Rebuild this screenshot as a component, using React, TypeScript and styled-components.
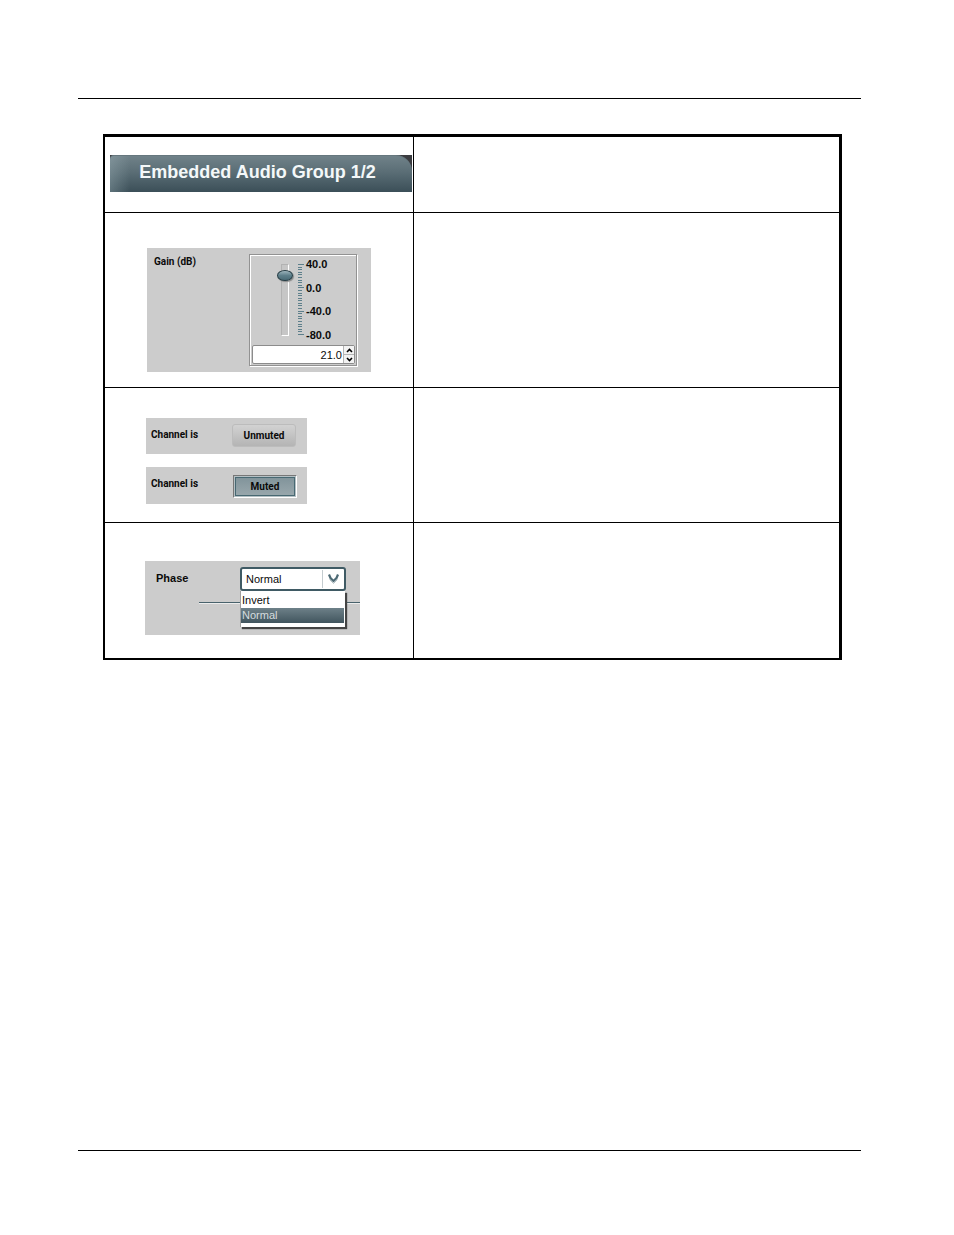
import { useState } from "react";
import styled, { createGlobalStyle, css } from "styled-components";

const palette = {
  panel: "#cccccc",
  teal: "#3f5a64",
  tick: "#5d7f8b",
  ink: "#0a0a0a",
};

const GlobalStyle = createGlobalStyle`
  body {
    margin: 0;
    background: #ffffff;
    color: ${palette.ink};
    font-family: "Liberation Sans", Arial, sans-serif;
  }
`;

const Page = styled.main`
  box-sizing: border-box;
  display: flex;
  min-height: 100vh;
  padding: 98px 93px 84px 78px;
`;

const Sheet = styled.section`
  flex: 1;
  border-top: 1px solid #000000;
  border-bottom: 1px solid #000000;
  padding: 35px 19px 35px 25px;
`;

const ParameterTable = styled.table`
  width: 100%;
  table-layout: fixed;
  border-collapse: separate;
  border-spacing: 0;
  border-style: solid;
  border-color: #000000;
  border-width: 3px 3px 2px 2px;
`;

const ControlCell = styled.td<{ $pad: string }>`
  box-sizing: border-box;
  width: 309px;
  padding: ${(props) => props.$pad};
  border-right: 1px solid #000000;
  vertical-align: top;

  tr:not(:last-child) > & {
    border-bottom: 1px solid #000000;
  }
`;

const DescriptionCell = styled.td`
  padding: 0;

  tr:not(:last-child) > & {
    border-bottom: 1px solid #000000;
  }
`;

const TabStrip = styled.div`
  background: #3b3c40;
`;

const Tab = styled.button`
  display: block;
  width: 100%;
  height: 37px;
  padding: 0 7px 4px 0;
  border: 0;
  border-radius: 4px 16px 0 0;
  background:
    linear-gradient(90deg, rgba(160, 180, 186, 0.35), rgba(160, 180, 186, 0) 20px),
    linear-gradient(#71838a, #5b6e76 45%, #3b4f58);
  box-shadow: inset 0 1px 0 #66777e;
  color: #f4f8f9;
  font-family: "Liberation Sans", Arial, sans-serif;
  font-size: 18px;
  font-weight: 700;
  line-height: 24px;
`;

const Panel = styled.div<{ $width: number; $height: number; $label: number }>`
  position: relative;
  box-sizing: border-box;
  display: grid;
  grid-template-columns: ${(props) => props.$label}px auto;
  justify-content: start;
  align-items: start;
  width: ${(props) => props.$width}px;
  min-height: ${(props) => props.$height}px;
  padding-top: 6px;
  background: ${palette.panel};
`;

const PanelStack = styled.div`
  display: flex;
  flex-direction: column;
  gap: 13px;
`;

const labelText = css`
  font-family: Roboto, "Liberation Sans", sans-serif;
  font-size: 10px;
  font-weight: 700;
  line-height: 14px;
`;

const Label = styled.label<{ $indent: number }>`
  ${labelText}
  padding-top: 1px;
  padding-left: ${(props) => props.$indent}px;
`;

const ChannelLabel = styled(Label)`
  padding-top: 4px;
`;

const WideLabel = styled(Label)`
  padding-top: 4px;
  font-family: "Liberation Sans", Arial, sans-serif;
  font-size: 11px;
`;

const GainBox = styled.div`
  box-sizing: border-box;
  display: flex;
  flex-direction: column;
  justify-content: space-between;
  width: 108px;
  height: 112px;
  padding: 8px 1px 1px 2px;
  border: 1px solid #929292;
  box-shadow: inset 1px 1px 0 #ffffff, 1px 1px 0 #ffffff;
`;

const Fader = styled.div`
  display: flex;
  align-items: flex-start;
  padding-left: 29px;
`;

const Track = styled.div`
  box-sizing: border-box;
  display: flex;
  align-items: center;
  justify-content: center;
  width: 8px;
  height: 72px;
  margin: 1px 9px 0 0;
  border: 1px solid #b2b2b2;
  border-right-color: #ffffff;
  border-bottom-color: #ffffff;
  background: #c6c6c6;
`;

const Slider = styled.input`
  flex: none;
  appearance: none;
  writing-mode: vertical-lr;
  direction: rtl;
  width: 16px;
  height: 82px;
  margin: 0;
  background: transparent;

  &::-webkit-slider-thumb {
    appearance: none;
    box-sizing: border-box;
    width: 16px;
    height: 11px;
    border: 1px solid #253c44;
    border-radius: 50%;
    background: linear-gradient(#9db4bc, #5e7f8a 50%, #4a6b76);
    box-shadow: 1px 1px 1px #8a8a8a;
  }
`;

const ScaleLabels = styled.div`
  display: flex;
  flex-direction: column;
  justify-content: space-between;
  height: 83px;
  margin: -5px 0 -6px 1px;
  font-size: 11px;
  font-weight: 700;
  line-height: 12px;
`;

const SpinBox = styled.div`
  box-sizing: border-box;
  display: flex;
  height: 19px;
  border: 1px solid #8c8c8c;
  border-radius: 2px;
  background: #ffffff;
`;

const SpinInput = styled.input`
  flex: 1;
  min-width: 0;
  padding: 0 1px 0 4px;
  border: 0;
  background: transparent;
  color: ${palette.ink};
  font-family: "Liberation Sans", sans-serif;
  font-size: 11px;
  text-align: right;
`;

const SpinButtons = styled.div`
  display: flex;
  flex-direction: column;
  width: 10px;
  border-left: 1px solid #b5b5b5;
`;

const SpinButton = styled.button`
  display: flex;
  flex: 1;
  align-items: center;
  justify-content: center;
  padding: 0;
  border: 0;
  background: #f2f2f2;

  & + & {
    border-top: 1px solid #b5b5b5;
  }
`;

const MuteButton = styled.button<{ $muted?: boolean }>`
  ${labelText}
  box-sizing: border-box;
  width: 64px;
  height: 23px;
  padding: 1px 0 0;
  border: 1px solid #bcbcbc;
  border-radius: 3px;
  background: linear-gradient(#d2d2d2, #b4b4b4);
  color: ${palette.ink};

  ${(props) =>
    props.$muted &&
    css`
      margin-top: 2px;
      border: 1px solid #777777;
      border-right-color: #ffffff;
      border-bottom-color: #ffffff;
      border-radius: 0;
      background: linear-gradient(#7f9299, #9ba9ae);
      box-shadow:
        inset 0 0 0 1px #b4bfc3,
        inset 0 0 0 2px #476872;
    `}
`;

const Divider = styled.hr`
  position: absolute;
  top: 41px;
  right: 0;
  left: 54px;
  height: 1px;
  margin: 0;
  border: 0;
  background: #48626c;
  box-shadow: 0 1px 0 #ececec;
`;

const Dropdown = styled.div`
  position: relative;
  width: 106px;
`;

const Select = styled.select`
  display: block;
  appearance: none;
  box-sizing: border-box;
  width: 100%;
  height: 24px;
  padding: 0 24px 0 4px;
  border: 2px solid ${palette.teal};
  border-radius: 3px;
  background: #ffffff;
  color: ${palette.ink};
  font-family: "Liberation Sans", sans-serif;
  font-size: 11px;
`;

const Chevron = styled.svg`
  position: absolute;
  top: 3px;
  right: 2px;
  pointer-events: none;
`;

const OptionList = styled.ul`
  position: absolute;
  top: 24px;
  left: 0;
  box-sizing: border-box;
  width: 105px;
  margin: 0;
  padding: 2px 1px 4px 0;
  border-left: 1px solid #a0a0a0;
  background: #ffffff;
  box-shadow: 2px 2px 1px #444444;
  list-style: none;
`;

const Option = styled.li<{ $active: boolean }>`
  padding-left: 1px;
  font-size: 11px;
  line-height: 15px;
  color: ${(props) => (props.$active ? "#d5dcdf" : palette.ink)};
  background: ${(props) =>
    props.$active ? "linear-gradient(#6d8088, #41555e)" : "transparent"};
`;

const DIVISIONS = 27;
const SCALE_HEIGHT = 70;

const Scale = () => (
  <svg width="7" height="73" shapeRendering="crispEdges" aria-hidden="true">
    {Array.from({ length: DIVISIONS + 1 }, (_, i) => (
      <rect
        key={i}
        x="0"
        y={1 + Math.round((i * SCALE_HEIGHT) / DIVISIONS)}
        width={i % 9 === 0 ? 6 : 4}
        height="1"
        fill={palette.tick}
      />
    ))}
  </svg>
);

const GainControl = () => {
  const [gain, setGain] = useState(21);

  return (
    <Panel $width={224} $height={124} $label={102}>
      <Label $indent={7} htmlFor="gain">
        Gain (dB)
      </Label>
      <GainBox>
        <Fader>
          <Track>
            <Slider
              type="range"
              aria-label="Gain fader"
              min={-80}
              max={40}
              value={gain}
              onChange={(event) => setGain(Number(event.target.value))}
            />
          </Track>
          <Scale />
          <ScaleLabels>
            <span>40.0</span>
            <span>0.0</span>
            <span>-40.0</span>
            <span>-80.0</span>
          </ScaleLabels>
        </Fader>
        <SpinBox>
          <SpinInput
            id="gain"
            type="text"
            value={gain.toFixed(1)}
            onChange={(event) => setGain(Number(event.target.value) || 0)}
          />
          <SpinButtons>
            <SpinButton
              aria-label="Increase gain"
              onClick={() => setGain(Math.min(40, gain + 1))}
            >
              <svg width="7" height="5" viewBox="0 0 7 5">
                <path d="M1 4L3.5 1.5L6 4" fill="none" stroke="#000" strokeWidth="1.6" />
              </svg>
            </SpinButton>
            <SpinButton
              aria-label="Decrease gain"
              onClick={() => setGain(Math.max(-80, gain - 1))}
            >
              <svg width="7" height="5" viewBox="0 0 7 5">
                <path d="M1 1L3.5 3.5L6 1" fill="none" stroke="#000" strokeWidth="1.6" />
              </svg>
            </SpinButton>
          </SpinButtons>
        </SpinBox>
      </GainBox>
    </Panel>
  );
};

const PhaseControl = () => {
  const [phase, setPhase] = useState("Normal");

  return (
    <Panel $width={215} $height={74} $label={95}>
      <Divider />
      <WideLabel $indent={11} htmlFor="phase">
        Phase
      </WideLabel>
      <Dropdown>
        <Select
          id="phase"
          value={phase}
          onChange={(event) => setPhase(event.target.value)}
        >
          <option>Invert</option>
          <option>Normal</option>
        </Select>
        <Chevron width="22" height="18" viewBox="0 0 22 18" fill="none">
          <path d="M0.5 0V18" stroke="#c4ccd0" />
          <path d="M7 4.5L8.5 8L11.5 11L14.5 8L16 4.5" stroke="#4d6a75" strokeWidth="2.2" />
          <path d="M7.5 9.5L11.5 13.5L15.5 9.5" stroke="#b4c0c4" />
        </Chevron>
        <OptionList role="listbox" aria-label="Phase options">
          {["Invert", "Normal"].map((name) => (
            <Option
              key={name}
              role="option"
              aria-selected={name === phase}
              $active={name === phase}
              onClick={() => setPhase(name)}
            >
              {name}
            </Option>
          ))}
        </OptionList>
      </Dropdown>
    </Panel>
  );
};

const App = () => (
  <>
    <GlobalStyle />
    <Page>
      <Sheet>
        <ParameterTable>
          <tbody>
            <tr>
              <ControlCell $pad="18px 1px 20px 5px">
                <TabStrip>
                  <Tab>Embedded Audio Group 1/2</Tab>
                </TabStrip>
              </ControlCell>
              <DescriptionCell />
            </tr>
            <tr>
              <ControlCell $pad="35px 0 15px 42px">
                <GainControl />
              </ControlCell>
              <DescriptionCell />
            </tr>
            <tr>
              <ControlCell $pad="30px 0 18px 41px">
                <PanelStack>
                  <Panel $width={161} $height={36} $label={86}>
                    <ChannelLabel $indent={5} htmlFor="unmuted">
                      Channel is
                    </ChannelLabel>
                    <MuteButton id="unmuted">Unmuted</MuteButton>
                  </Panel>
                  <Panel $width={161} $height={37} $label={87}>
                    <ChannelLabel $indent={5} htmlFor="muted">
                      Channel is
                    </ChannelLabel>
                    <MuteButton id="muted" $muted>
                      Muted
                    </MuteButton>
                  </Panel>
                </PanelStack>
              </ControlCell>
              <DescriptionCell />
            </tr>
            <tr>
              <ControlCell $pad="38px 0 23px 40px">
                <PhaseControl />
              </ControlCell>
              <DescriptionCell />
            </tr>
          </tbody>
        </ParameterTable>
      </Sheet>
    </Page>
  </>
);

export default App;
